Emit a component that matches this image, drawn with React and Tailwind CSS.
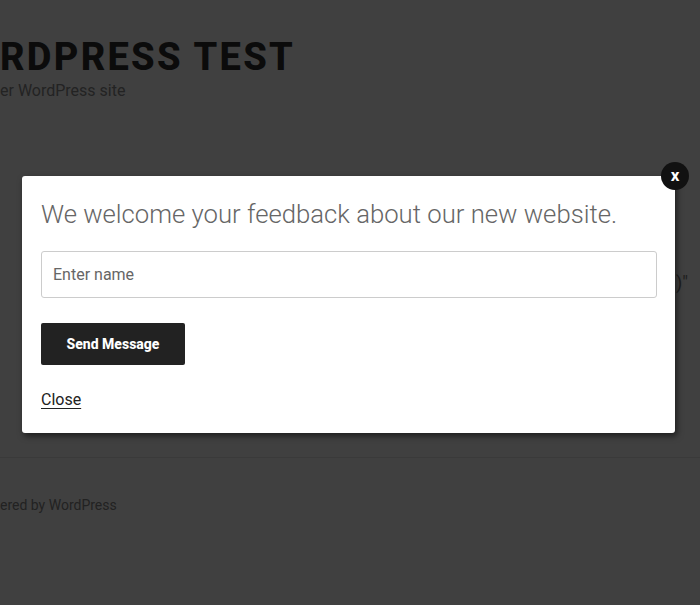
import React from "react";

export default function App() {
  return (
    <div className="relative h-[605px] w-[700px] overflow-hidden bg-[#404040] font-['Roboto','Liberation_Sans',sans-serif]">
      {/* page behind the overlay */}
      <header className="pt-[35px]">
        <h1 className="text-[38px] font-extrabold uppercase leading-[44px] tracking-[0.06em] text-[#0b0b0b]">
          rdpress test
        </h1>
        <p className="mt-[2px] text-[16px] leading-[20px] text-[#232323]">er WordPress site</p>
      </header>

      <div className="mt-[170px] pr-[12px] text-right text-[18px] leading-[24px] text-[#1e1e1e]">)"</div>

      <div className="mt-[162px] border-t border-[#3a3a3a]"></div>

      <footer className="mt-[37px] text-[14px] leading-[20px] text-[#222222]">ered by WordPress</footer>

      {/* modal */}
      <div className="absolute left-[22px] top-[176px] h-[257px] w-[653px] rounded-[3px] bg-white shadow-[2px_3px_6px_rgba(0,0,0,0.55)]">
        <div className="flex flex-col px-[19px] pt-[22px]">
          <h2 className="text-[25.7px] font-light leading-[32px] text-[#666666]">
            We welcome your feedback about our new website.
          </h2>
          <input
            type="text"
            placeholder="Enter name"
            className="mt-[21px] h-[47px] w-[616px] rounded-[3px] border border-[#cccccc] px-[11px] text-[16px] text-[#333] placeholder:text-[#666666] outline-none"
          />
          <button className="mt-[25px] h-[42px] w-[144px] rounded-[2px] bg-[#222222] text-[14px] font-extrabold text-white">
            Send Message
          </button>
          <a href="#" className="mt-[24px] self-start text-[16px] leading-[22px] text-[#222222] underline underline-offset-[3px]">
            Close
          </a>
        </div>
        <button className="absolute right-[-14px] top-[-14px] flex h-[28px] w-[28px] items-center justify-center rounded-full bg-[#111111] pb-[1px] text-[17px] font-bold leading-none text-white">
          x
        </button>
      </div>
    </div>
  );
}
